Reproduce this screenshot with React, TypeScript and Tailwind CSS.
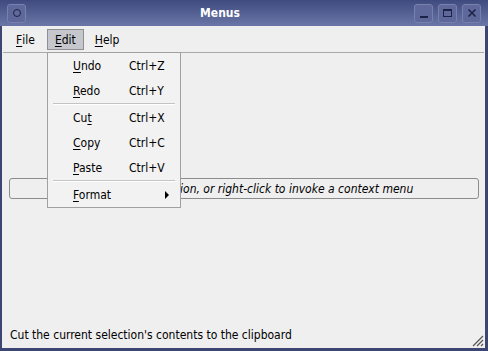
import React from "react";

const font = "font-['DejaVu_Sans_Condensed','Liberation_Sans',sans-serif]";

function Mn({ text, at }: { text: string; at: number }) {
  // underline the mnemonic letter
  return (
    <>
      {text.slice(0, at)}
      <span className="underline underline-offset-2 decoration-1">{text[at]}</span>
      {text.slice(at + 1)}
    </>
  );
}

function TitleButton({ children }: { children: React.ReactNode }) {
  return (
    <div className="w-[19px] h-[19px] rounded-[3px] bg-[#5e689a] border border-[#7880ad] flex items-center justify-center">
      {children}
    </div>
  );
}

const editItems = [
  { label: "Undo", at: 0, key: "Ctrl+Z" },
  { label: "Redo", at: 0, key: "Ctrl+Y" },
  null,
  { label: "Cut", at: 2, key: "Ctrl+X" },
  { label: "Copy", at: 0, key: "Ctrl+C" },
  { label: "Paste", at: 0, key: "Ctrl+V" },
  null,
];

export default function App() {
  return (
    <div className={`w-[488px] h-[351px] flex flex-col bg-[#3d4573] text-[12px] text-black ${font}`}>
      {/* title bar */}
      <div className="h-[26px] flex items-center px-[7px] bg-gradient-to-b from-[#3f4a7e] to-[#6b76a8]">
        <TitleButton>
          <div className="w-[8px] h-[8px] rounded-full border-[1.5px] border-[#1c2346]" />
        </TitleButton>
        <div className="flex-1 text-center text-white font-bold text-[12px]">Menus</div>
        <div className="flex gap-[5px]">
          <TitleButton>
            <div className="w-[8px] h-[2px] bg-[#1c2346] mt-[7px]" />
          </TitleButton>
          <TitleButton>
            <div className="w-[9px] h-[8px] border border-[#1c2346] border-t-2" />
          </TitleButton>
          <TitleButton>
            <svg width="10" height="10" viewBox="0 0 10 10">
              <path d="M1.5 1.5 L8.5 8.5 M8.5 1.5 L1.5 8.5" stroke="#1c2346" strokeWidth="1.6" />
            </svg>
          </TitleButton>
        </div>
      </div>

      {/* client area */}
      <div className="flex-1 flex flex-col ml-[2px] mr-[3px] mb-[3px] bg-[#efefef] relative">
        {/* menubar */}
        <div className="h-[27px] flex items-center pl-[5px] border-b border-[#a9a9a9] mx-[1px] pt-[1px]">
          <div className="px-[7px] h-[21px] flex items-center border border-transparent"><Mn text="File" at={0} /></div>
          <div className="px-[7px] h-[21px] flex items-center bg-[#c5c7cd] border border-[#8e8f94] ml-[4px]"><Mn text="Edit" at={0} /></div>
          <div className="px-[7px] h-[21px] flex items-center border border-transparent ml-[3px]"><Mn text="Help" at={0} /></div>
        </div>

        {/* central label */}
        <div className="flex-1 flex items-center px-[7px] pr-[6px] pt-[2px]">
          <div className="w-full h-[21px] rounded-[3px] border border-[#8c8c8c] flex items-center justify-center italic">
            Choose a menu option, or right-click to invoke a context menu
          </div>
        </div>

        {/* status bar */}
        <div className="h-[26px] flex items-center pl-[8px] relative">
          Cut the current selection's contents to the clipboard
          <svg className="absolute right-[1px] bottom-[1px]" width="13" height="13" viewBox="0 0 13 13">
            <path d="M12 2 L2 12 M12 6 L6 12 M12 10 L10 12" stroke="#555" strokeWidth="1.2" />
          </svg>
        </div>

        {/* open Edit menu */}
        <div className="absolute left-[45px] top-[26px] w-[134px] bg-[#f2f2f2] border border-[#a0a0a0]">
          {editItems.map((it, i) =>
            it ? (
              <div key={i} className="h-[25px] flex items-center">
                <div className="w-[81px] pl-[25px]"><Mn text={it.label} at={it.at} /></div>
                <div>{it.key}</div>
              </div>
            ) : (
              <div key={i} className="h-[2px] mx-[5px] border-t border-[#c4c4c4] border-b border-b-white" />
            )
          )}
          <div className="h-[25px] flex items-center">
            <div className="w-[117px] pl-[25px]"><Mn text="Format" at={0} /></div>
            <svg width="5" height="8" viewBox="0 0 5 8"><path d="M0 0 L4 4 L0 8 Z" fill="#000" /></svg>
          </div>
        </div>
      </div>
    </div>
  );
}
